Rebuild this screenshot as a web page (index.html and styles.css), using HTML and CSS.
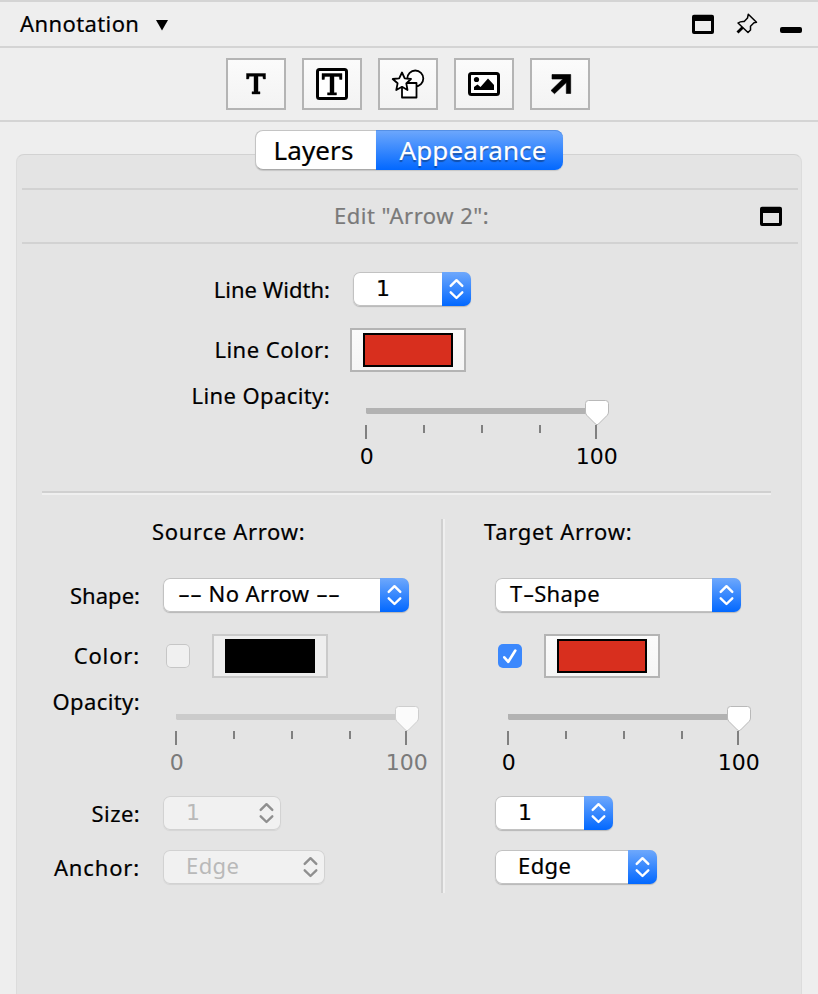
FILE: index.html
```html
<!DOCTYPE html>
<html lang="en">
<head>
<meta charset="utf-8">
<title>Annotation</title>
<link rel="stylesheet" href="styles.css">
</head>
<body>
<svg width="0" height="0" class="defs">
  <defs>
    <symbol id="chevrons" viewBox="0 0 29 34"><path d="M8.700 13.900 14.500 8.200 20.300 13.900M8.700 20.300 14.500 26 20.300 20.300" fill="none" stroke="currentColor" stroke-width="2.400" stroke-linecap="round" stroke-linejoin="round"/></symbol>
    <symbol id="window" viewBox="0 0 22 20"><path fill-rule="evenodd" d="M2 .7H20Q22 .7 22 2.700V18Q22 20 20 20H2Q0 20 0 18V2.700Q0 .7 2 .7ZM3 7V17H19V7Z" fill="#000"/></symbol>
    <symbol id="slider" viewBox="0 0 260 44">
      <path class="track" d="M16 12H247V18H17L16 17Z"/>
      <path d="M16 29V43M74 29V37M132 29V37M190 29V37M246 29V43" stroke="#808080" stroke-width="2"/>
      <path class="thumb" d="M238.500 4.500H255.500Q258.500 4.500 258.500 7.500V16Q258.500 18 257 19.500L248.500 28Q247 29.500 245.500 28L237 19.500Q235.500 18 235.500 16V7.500Q235.500 4.500 238.500 4.500Z"/>
    </symbol>
  </defs>
</svg>

<header class="titlebar">
  <span class="title">Annotation</span>
  <svg class="caret" width="12" height="11"><path d="M0 0H12L6 10.500Z"/></svg>
  <span class="spacer"></span>
  <svg class="win" width="22" height="20"><use href="#window"/></svg>
  <svg class="pin" width="22" height="22" viewBox="0 0 22 22"><path d="M12.300 1.200 20.500 9.200 18 9.800 14.500 13.200V17L12 19.500 2 10Q4.500 8.200 8.200 8.500L11.500 5Z" fill="#eee" stroke="#000" stroke-width="1.500" stroke-linejoin="round"/><path d="M6.600 14.500 1.500 19.500" stroke="#000" stroke-width="2.800"/></svg>
  <svg class="min" width="22" height="6"><rect width="22" height="6" rx="2"/></svg>
</header>

<nav class="toolbar">
  <button class="tool"><svg width="60" height="52" viewBox="0 0 60 52"><path d="M20.500 15.500H39.500V21H37.300L36.700 18.300H32V33.700H34V36H26V33.700H28V18.300H23.300L22.700 21H20.500Z" stroke="#000" stroke-width=".4"/></svg></button>
  <button class="tool"><svg width="60" height="52" viewBox="0 0 60 52"><rect x="15.500" y="11.500" width="29" height="29" rx="2" fill="#fff" stroke="#000" stroke-width="3"/><path d="M20 15.500H40V21.500H37.700L37.200 18.500H32V34.700H34.500V37H25.500V34.700H28V18.500H22.800L22.300 21.500H20Z" stroke="#000" stroke-width=".4"/></svg></button>
  <button class="tool"><svg width="60" height="52" viewBox="0 0 60 52" fill="#fff" stroke="#000" stroke-width="1.800" stroke-linejoin="round"><circle cx="37.300" cy="20.500" r="8"/><rect x="24" y="25" width="14.500" height="14.500"/><path d="M24 14.500 26.700 20.300 33 21 28.300 25.300 29.500 32 24 28.800 18.300 32 19.600 25.300 14.700 21 21.200 20.300Z"/></svg></button>
  <button class="tool"><svg width="60" height="52" viewBox="0 0 60 52"><rect x="15.500" y="15.500" width="29" height="21" rx="2" fill="#fff" stroke="#000" stroke-width="3"/><circle cx="22.500" cy="21.500" r="2.600"/><path d="M20 32V29L23.500 26.500 26.500 29 34 20.500 40 27V32Z"/></svg></button>
  <button class="tool"><svg width="60" height="52" viewBox="0 0 60 52"><path d="M22 16.500H40.700V35.500H36.300V24.500L24.500 35.700 21 32.500 32.800 21H22Z" stroke="#000" stroke-width=".6" stroke-linejoin="round"/></svg></button>
</nav>

<div class="tabs">
  <button class="tab layers"><span>Layers</span></button>
  <button class="tab active"><span>Appearance</span></button>
</div>

<main class="panel">
  <div class="editbar">
    <span class="edit-title">Edit "Arrow 2":</span>
    <svg class="win" width="22" height="20"><use href="#window"/></svg>
  </div>

  <section class="form line">
    <div class="row"><label class="tight">Line Width:</label>
      <div class="select small"><span class="num">1</span><i><svg width="29" height="34"><use href="#chevrons"/></svg></i></div></div>
    <div class="row"><label class="roomy">Line Color:</label><button class="color"><b class="red"></b></button></div>
    <div class="row tall"><label>Line Opacity:</label>
      <div class="slider"><svg width="260" height="44"><use href="#slider"/></svg><div class="scale"><span>0</span><span>100</span></div></div></div>
  </section>

  <hr class="rule">

  <div class="arrows">
    <section class="form source">
      <h2>Source Arrow:</h2>
      <div class="row"><label class="tight">Shape:</label>
        <div class="select large"><span class="noarrow"><em class="dash two">--</em> No Arrow <em class="dash two">--</em></span><i><svg width="29" height="34"><use href="#chevrons"/></svg></i></div></div>
      <div class="row"><label class="wide">Color:</label><span class="check"></span><button class="color off"><b></b></button></div>
      <div class="row tall"><label>Opacity:</label>
        <div class="slider off"><svg width="260" height="44"><use href="#slider"/></svg><div class="scale"><span>0</span><span>100</span></div></div></div>
      <div class="row"><label>Size:</label>
        <div class="select small off"><span class="num">1</span><i><svg width="29" height="34"><use href="#chevrons"/></svg></i></div></div>
      <div class="row last"><label class="wide">Anchor:</label>
        <div class="select medium off"><span class="edge">Edge</span><i><svg width="29" height="34"><use href="#chevrons"/></svg></i></div></div>
    </section>
    <section class="form target">
      <h2>Target Arrow:</h2>
      <div class="row">
        <div class="select large"><span class="tshape">T<em class="dash one">-</em>Shape</span><i><svg width="29" height="34"><use href="#chevrons"/></svg></i></div></div>
      <div class="row"><span class="check on"><svg width="24" height="24"><path d="M6.300 13.300 10.300 17.800 17.300 6.500" fill="none" stroke="#fff" stroke-width="2.600" stroke-linecap="round" stroke-linejoin="round"/></svg></span><button class="color"><b class="red"></b></button></div>
      <div class="row tall">
        <div class="slider"><svg width="260" height="44"><use href="#slider"/></svg><div class="scale"><span>0</span><span>100</span></div></div></div>
      <div class="row">
        <div class="select small"><span class="num">1</span><i><svg width="29" height="34"><use href="#chevrons"/></svg></i></div></div>
      <div class="row last">
        <div class="select medium"><span class="edge">Edge</span><i><svg width="29" height="34"><use href="#chevrons"/></svg></i></div></div>
    </section>
  </div>
</main>
</body>
</html>
```
FILE: styles.css
```css
* { box-sizing: border-box; }
body {
  margin: 0;
  height: 994px;
  overflow: hidden;
  display: flex;
  flex-direction: column;
  background: #eee;
  color: #000;
  font: 22px/32px "Noto Sans", "Liberation Sans", sans-serif;
  letter-spacing: .4px;
  white-space: nowrap;
}
button { padding: 0; font: inherit; letter-spacing: inherit; color: inherit; }
svg { display: block; flex: none; }
.defs { position: absolute; }
.spacer { flex: 1; }

.titlebar {
  height: 48px;
  flex: none;
  display: flex;
  align-items: center;
  padding: 0 16px 0 20px;
  border-top: 2px solid #d4d4d4;
  border-bottom: 2px solid #d4d4d4;
}
.title { width: 136px; margin-top: -2px; -webkit-text-stroke: .2px; letter-spacing: .4px; }
.caret { margin-top: 2px; }
.pin { margin: 0 22px; }
.min { margin-top: 12px; }

.toolbar {
  height: 74px;
  flex: none;
  display: flex;
  justify-content: center;
  gap: 16px;
  padding: 10px 2px 0 0;
  border-bottom: 2px solid #d4d4d4;
}
.tool {
  width: 60px;
  height: 52px;
  border: 2px solid #b4b4b4;
  background: linear-gradient(#fbfbfb, #f3f3f3);
}
.tool svg { margin: -2px; }

.tabs {
  position: relative;
  z-index: 1;
  display: flex;
  flex: none;
  width: 308px;
  height: 40px;
  margin: 8px 0 -16px 255px;
  font-size: 26px;
  line-height: 38px;
  letter-spacing: .1px;
}
.tab { border: 0; height: 40px; -webkit-text-stroke: .2px; }
.layers {
  width: 121px;
  background: #fff;
  border: 1px solid #c4c4c4;
  border-right: 0;
  border-bottom-color: #a9a9a9;
  border-radius: 8px 0 0 8px;
  padding-right: 5px;
  box-shadow: 0 1px 1px #0002;
}
.active {
  width: 187px;
  padding-left: 7px;
  color: #fff;
  background: linear-gradient(#6ea8fc, #0268ff);
  border-radius: 0 8px 8px 0;
  text-shadow: 0 2px 1px #0005;
  box-shadow: inset 0 1px #5590e6, 0 1px 1px #0002;
}

.panel {
  flex: 1;
  margin: 0 16px;
  border: 1px solid #dcdcdc;
  border-top-color: #d2d2d2;
  border-bottom: 0;
  border-radius: 8px 8px 0 0;
  background: #e4e4e4;
}
.editbar {
  height: 56px;
  margin: 33px 3px 0 5px;
  border-top: 2px solid #d2d2d2;
  border-bottom: 2px solid #d2d2d2;
  display: flex;
  align-items: center;
  justify-content: space-between;
  padding: 0 16px 0 312px;
  color: #7a7a7a;
}
.edit-title { margin-top: -2px; letter-spacing: .5px; -webkit-text-stroke: .2px; }

.row { display: flex; align-items: center; height: 60px; }
.row + .row { height: 62px; }
.row.tall { height: 96px; align-items: flex-start; }
.row.tall + .row { height: 60px; }
.row.row.last { height: 48px; }
.form label { flex: none; text-align: right; margin-right: 20px; -webkit-text-stroke: .2px; }
.row.tall label { margin-top: -2px; }
.row + .row:not(.tall) label { margin-top: -2px; }
.source .row.tall + .row label, .source .row.last label { margin-top: 0; }
.form .tight { letter-spacing: .03px; }
.form .roomy { letter-spacing: .5px; }
.form .wide { letter-spacing: .85px; }
.line { padding-top: 15px; }
.line label { width: 313px; }
.source label { width: 123px; }

.select {
  display: flex;
  height: 34px;
  margin-left: 3px;
  line-height: 31px;
  background: #fff;
  border-radius: 7px;
  box-shadow: inset 0 0 0 1px #c2c2c2, 0 1px 1px #0003;
  overflow: hidden;
}
.select span { flex: 1; padding-left: 23px; }
.select:not(.off) span { -webkit-text-stroke: .2px; }
.select i { width: 29px; color: #fff; background: linear-gradient(#6ea8fc, #0268ff); }
.small { width: 118px; }
.medium { width: 162px; }
.large { width: 246px; }
.select .noarrow { padding-left: 15px; }
.select .tshape { padding-left: 15px; }
.dash { display: inline-block; font-style: normal; letter-spacing: 0; transform-origin: 0 50%; }
.dash.two { width: 24.500px; transform: scaleX(1.7); }
.dash.one { width: 11.500px; transform: scaleX(1.6); }
.num, .scale { font-family: "DejaVu Sans", sans-serif; letter-spacing: 0; }
.select .num { line-height: 33px; }
.select.off { background: #f1f1f1; color: #b9b9b9; box-shadow: inset 0 0 0 1px #d2d2d2, 0 1px 1px #0001; }
.select.off i { color: #8f8f8f; background: none; }

.color {
  width: 116px;
  height: 44px;
  border: 2px solid #b4b4b4;
  background: linear-gradient(#fbfbfb, #f5f5f5);
}
.color b { display: block; width: 90px; height: 34px; margin: 0 auto; background: #000; border: 2px solid #000; }
.color .red { background: #d82f1e; }
.color.off { border-color: #cacaca; background: #eee; }
.check {
  width: 24px;
  height: 24px;
  margin: 0 22px 0 6px;
  border-radius: 5px;
  background: #f0f0f0;
  box-shadow: inset 0 0 0 1px #c6c6c6;
}
.check.on { background: #3b88fd; box-shadow: none; }

.slider { padding-top: 15px; width: 280px; --track: #b2b2b2; --thumb: #fff; --edge: #b9b9b9; }
.slider.off { color: #7a7a7a; --track: #cbcbcb; --thumb: #fbfbfb; --edge: #cecece; }
.track { fill: var(--track); }
.thumb { fill: var(--thumb); stroke: var(--edge); }
.scale { display: flex; height: 32px; line-height: 34px; }
.scale span { width: 34px; text-align: center; }
.scale span + span { margin-left: 180px; width: 68px; }

.rule { height: 4px; width: 729px; margin: 14px 0 24px 25px; border: 0; border-top: 2px solid #d0d0d0; border-bottom: 2px solid #efefef; }
.arrows { display: flex; height: 374px; }
.form h2 { margin: -2px 0 20px; height: 28px; font: inherit; line-height: 28px; letter-spacing: .7px; -webkit-text-stroke: .2px; }
.source { width: 424px; }
.source h2 { padding-left: 135px; }
.target { border-left: 2px solid #d0d0d0; box-shadow: inset 2px 0 #efefef; padding-left: 49px; }
.target h2 { margin-left: -8px; }
```
